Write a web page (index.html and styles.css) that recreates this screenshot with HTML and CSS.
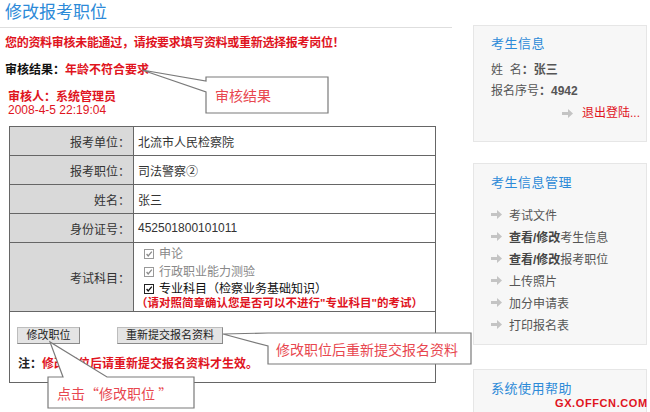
FILE: index.html
```html
<!DOCTYPE html>
<html lang="zh">
<head>
<meta charset="utf-8">
<title>修改报考职位</title>
<link rel="stylesheet" href="styles.css">
</head>
<body>
<div class="page">
  <div class="main">
    <h1 class="title">修改报考职位</h1>
    <p class="warn">您的资料审核未能通过，请按要求填写资料或重新选择报考岗位！</p>
    <p class="result">审核结果：<span class="red">年龄不符合要求</span></p>
    <div class="reviewer">
      <div class="rv-name">审核人：系统管理员</div>
      <div class="rv-date">2008-4-5 22:19:04</div>
    </div>
    <table class="form">
      <tr><td class="lbl">报考单位：</td><td class="val">北流市人民检察院</td></tr>
      <tr><td class="lbl">报考职位：</td><td class="val">司法警察②</td></tr>
      <tr><td class="lbl">姓名：</td><td class="val">张三</td></tr>
      <tr><td class="lbl">身份证号：</td><td class="val">452501800101011</td></tr>
      <tr class="exam">
        <td class="lbl">考试科目：</td>
        <td class="val subjects">
          <div class="subj disabled"><span class="cb"><svg viewBox="0 0 10 10" width="10" height="10"><path d="M2 5 L4 7.5 L8.5 2" fill="none" stroke="#8a8a8a" stroke-width="1.6"/></svg></span><span>申论</span></div>
          <div class="subj disabled"><span class="cb"><svg viewBox="0 0 10 10" width="10" height="10"><path d="M2 5 L4 7.5 L8.5 2" fill="none" stroke="#8a8a8a" stroke-width="1.6"/></svg></span><span>行政职业能力测验</span></div>
          <div class="subj on last"><span class="cb"><svg viewBox="0 0 10 10" width="10" height="10"><path d="M2 5 L4 7.5 L8.5 2" fill="none" stroke="#111" stroke-width="1.6"/></svg></span><span>专业科目（检察业务基础知识）</span></div>
          <div class="subj-note">（请对照简章确认您是否可以不进行"专业科目"的考试）</div>
        </td>
      </tr>
      <tr class="actions">
        <td colspan="2">
          <div class="btns">
            <span class="btn btn-a">修改职位</span>
            <span class="btn btn-b">重新提交报名资料</span>
          </div>
          <p class="note">注：<span class="red">修改职位后请重新提交报名资料才生效。</span></p>
        </td>
      </tr>
    </table>
  </div>

  <aside class="side">
    <div class="box box-info">
      <h2 class="box-title">考生信息</h2>
      <div class="info-row">姓&nbsp;&nbsp;名<b>：张三</b></div>
      <div class="info-row">报名序号<b>：4942</b></div>
      <div class="logout"><span class="arr"><svg viewBox="0 0 12 9" width="12" height="9"><path d="M0 3 H6 V0 L11 4.5 L6 9 V6 H0 Z" fill="#c4c4c4"/></svg></span><span class="red">退出登陆...</span></div>
    </div>
    <div class="box box-menu">
      <h2 class="box-title">考生信息管理</h2>
      <ul class="menu">
        <li><span class="arr"><svg viewBox="0 0 12 9" width="12" height="9"><path d="M0 3 H6 V0 L11 4.5 L6 9 V6 H0 Z" fill="#c4c4c4"/></svg></span><span>考试文件</span></li>
        <li><span class="arr"><svg viewBox="0 0 12 9" width="12" height="9"><path d="M0 3 H6 V0 L11 4.5 L6 9 V6 H0 Z" fill="#c4c4c4"/></svg></span><span><b>查看/修改</b>考生信息</span></li>
        <li><span class="arr"><svg viewBox="0 0 12 9" width="12" height="9"><path d="M0 3 H6 V0 L11 4.5 L6 9 V6 H0 Z" fill="#c4c4c4"/></svg></span><span><b>查看/修改</b>报考职位</span></li>
        <li><span class="arr"><svg viewBox="0 0 12 9" width="12" height="9"><path d="M0 3 H6 V0 L11 4.5 L6 9 V6 H0 Z" fill="#c4c4c4"/></svg></span><span>上传照片</span></li>
        <li><span class="arr"><svg viewBox="0 0 12 9" width="12" height="9"><path d="M0 3 H6 V0 L11 4.5 L6 9 V6 H0 Z" fill="#c4c4c4"/></svg></span><span>加分申请表</span></li>
        <li><span class="arr"><svg viewBox="0 0 12 9" width="12" height="9"><path d="M0 3 H6 V0 L11 4.5 L6 9 V6 H0 Z" fill="#c4c4c4"/></svg></span><span>打印报名表</span></li>
      </ul>
    </div>
    <div class="box box-help">
      <h2 class="box-title">系统使用帮助</h2>
    </div>
  </aside>

  <svg class="callouts" width="650" height="412" viewBox="0 0 650 412">
    <g fill="#fff" stroke="#7a7a7a" stroke-width="1.2" stroke-linejoin="miter">
      <path d="M206 77 H328 V113 H206 V92 L142 70 L206 81 Z"/>
      <path d="M268 333 H471 V364 H268 V346 L223 334 Z"/>
      <path d="M48 377 H63 L50 342 L107 377 H194 V408 H48 Z"/>
    </g>
  </svg>
  <div class="co-text co1">审核结果</div>
  <div class="co-text co2">修改职位后重新提交报名资料</div>
  <div class="co-text co3">点击“修改职位 ”</div>
  <div class="watermark">GX.OFFCN.COM</div>
</div>
</body>
</html>
```

FILE: styles.css
```css
* { box-sizing: border-box; }
html, body { margin: 0; padding: 0; background: #fff; }
body {
  font-family: "Liberation Sans", "Noto Sans CJK SC", sans-serif;
  font-size: 12px;
  color: #333;
}
.page {
  position: relative;
  width: 650px;
  height: 412px;
  overflow: hidden;
  display: flex;
  align-items: flex-start;
}
.red { color: #e0141e; }

.main { width: 452px; flex: none; }
.title {
  margin: 0;
  font-size: 17px;
  font-weight: normal;
  line-height: 24px;
  padding: 1px 0 1px 5px;
  color: #2c8ad8;
  border-bottom: 1px solid #dedede;
  height: 28px;
}
.warn {
  margin: 8px 0 0 5px;
  line-height: 14px;
  font-weight: bold;
  color: #e0141e;
  letter-spacing: -0.3px;
}
.result {
  margin: 13px 0 0 5px;
  line-height: 14px;
  font-weight: bold;
  color: #111;
}
.reviewer {
  margin: 14px 0 0 8px;
  color: #e0141e;
  line-height: 13px;
}
.rv-name { font-weight: bold; }
.rv-date { font-size: 12px; }

.form {
  margin: 9px 0 0 9px;
  width: 427px;
  border-collapse: collapse;
  border: 1px solid #333;
}
.form td {
  border: 1px solid #666;
  padding: 0;
  height: 29px;
}
.form .lbl {
  width: 124px;
  background: #d9d9d9;
  text-align: right;
  padding-right: 3px;
  color: #333;
}
.form .val { padding-left: 4px; color: #333; }
.exam td { height: 69px; }
.form .subjects { vertical-align: top; padding-top: 2px; }
.subj {
  display: flex;
  align-items: center;
  gap: 5px;
  margin-left: 6px;
  line-height: 18px;
}
.subj.last { line-height: 16px; }
.subj.disabled { color: #888; }
.subj.on { color: #111; }
.cb {
  width: 10px; height: 10px;
  display: inline-flex;
  border: 1px solid #999;
  background: #fff;
}
.cb svg { display: block; width: 8px; height: 8px; }
.subj.on .cb { border-color: #222; }
.subj-note {
  color: #e0141e;
  font-weight: bold;
  line-height: 13px;
  margin-left: -2px;
  font-size: 11.5px;
}
.actions td { height: 71px; vertical-align: top; padding: 15px 0 0 7px; }
.btns { display: flex; gap: 37px; }
.btn {
  display: inline-block;
  height: 17px;
  line-height: 15px;
  font-size: 11px;
  text-align: center;
  background: #e4e4e4;
  border: 1px solid #8a8a8a;
  border-top-color: #bdbdbd;
  border-left-color: #bdbdbd;
  color: #222;
}
.btn-a { width: 63px; }
.btn-b { width: 106px; }
.note {
  margin: 13px 0 0 1px;
  font-weight: bold;
  color: #222;
  line-height: 14px;
}

.side {
  margin-left: 21px;
  width: 174px;
  flex: none;
}
.box {
  background: #f7f7f7;
  border: 1px solid #e6e6e6;
  padding-left: 17px;
}
.box-title {
  margin: 0;
  font-size: 13px;
  font-weight: normal;
  color: #2c8ad8;
  line-height: 16px;
  letter-spacing: 0.5px;
}
.box-info { margin-top: 25px; height: 117px; padding-top: 10px; }
.info-row { line-height: 21px; color: #555; }
.box-info .box-title { margin-bottom: 8px; }
.info-row b { color: #555; }
.logout {
  display: flex;
  justify-content: flex-end;
  align-items: center;
  gap: 8px;
  padding-right: 6px;
  line-height: 22px;
}
.arr { display: inline-flex; }
.box-menu { margin-top: 21px; height: 182px; padding-top: 11px; }
.menu { list-style: none; margin: 12px 0 0 0; padding: 0; }
.menu li {
  display: flex;
  align-items: center;
  gap: 6px;
  height: 22px;
  color: #555;
}
.menu li b { color: #444; }
.box-help { margin-top: 24px; height: 60px; padding-top: 11px; }

.callouts { position: absolute; left: 0; top: 0; pointer-events: none; }
.co-text {
  position: absolute;
  font-family: "Noto Sans CJK SC", sans-serif;
  font-size: 14px;
  color: #e8474f;
  line-height: 18px;
  white-space: nowrap;
}
.co1 { left: 215px; top: 86px; }
.co2 { left: 276px; top: 340px; }
.co3 { left: 57px; top: 384px; }
.watermark {
  position: absolute;
  left: 555px;
  top: 397px;
  font-family: "Liberation Sans", sans-serif;
  font-weight: bold;
  font-size: 11px;
  letter-spacing: 0.6px;
  color: #e0141e;
  line-height: 12px;
}
```
